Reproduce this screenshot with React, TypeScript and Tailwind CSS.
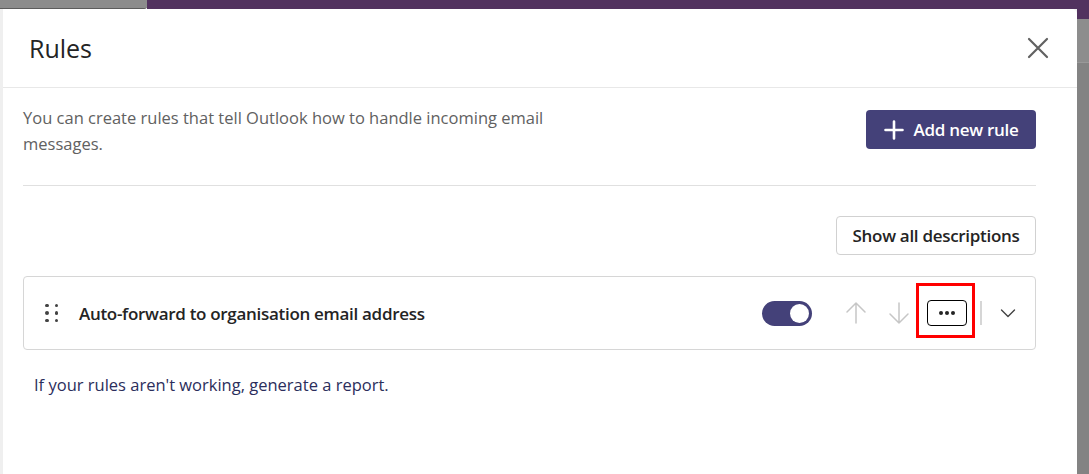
import React from "react";

const font = { fontFamily: '"Open Sans", "Noto Sans", sans-serif' };

function Plus() {
  return (
    <svg width="20" height="20" viewBox="0 0 20 20" className="shrink-0">
      <path d="M10 1.5v17M1.5 10h17" stroke="white" strokeWidth="2.6" strokeLinecap="round" />
    </svg>
  );
}

function Close() {
  return (
    <svg width="22" height="22" viewBox="0 0 22 22">
      <path d="M2 2l18 18M20 2L2 20" stroke="#616161" strokeWidth="2.2" strokeLinecap="round" />
    </svg>
  );
}

function Arrow({ down }: { down?: boolean }) {
  return (
    <svg width="22" height="24" viewBox="0 0 22 24" style={{ transform: down ? "rotate(180deg)" : undefined }}>
      <path d="M11 22V2M2 11l9-9 9 9" stroke="#c6c6c6" strokeWidth="1.5" fill="none" strokeLinecap="round" strokeLinejoin="round" />
    </svg>
  );
}

export default function App() {
  return (
    <div className="w-[1089px] h-[474px] overflow-hidden bg-[#f1f1f1] flex flex-col" style={font}>
      <div className="flex h-[9px] shrink-0">
        <div className="w-[147px] bg-[#8c8c8c] border-b border-[#5c5c5c] rounded-br-[3px]" />
        <div className="flex-1 bg-[#52325f]" />
      </div>
      <div className="flex flex-1 min-h-0">
        <div className="w-[3px] bg-[#efefef]" />
        <div className="flex-1 bg-white rounded-tr-[5px] flex flex-col">
          <div className="h-[79px] border-b border-[#e8e8e8] flex items-center justify-between pl-[26px] pr-[28px] shrink-0">
            <div className="text-[25px] font-medium text-[#242424] pt-[2px]">Rules</div>
            <Close />
          </div>
          <div className="pl-[20px] pr-[41px] flex flex-col">
            <div className="flex justify-between items-start pt-[17px] pb-[28px] border-b border-[#e0e0e0]">
              <p className="text-[16.5px] leading-[26px] text-[#616161] w-[560px]">
                You can create rules that tell Outlook how to handle incoming email messages.
              </p>
              <button className="mt-[5px] h-[39px] w-[170px] rounded-[4px] bg-[#444179] text-white flex items-center justify-center gap-[10px] text-[17px] font-semibold">
                <Plus />
                <span className="tracking-[-0.3px]">Add new rule</span>
              </button>
            </div>
            <div className="flex justify-end pt-[30px]">
              <button className="h-[39px] w-[200px] rounded-[4px] border border-[#d1d1d1] text-[17px] font-semibold text-[#242424] tracking-[-0.3px]">
                Show all descriptions
              </button>
            </div>
            <div className="mt-[21px] h-[74px] border border-[#d6d6d6] rounded-[4px] flex items-center pl-[21px] pr-[19px]">
              <div className="grid grid-cols-2 gap-x-[6px] gap-y-[4px] w-[13px]">
                {Array.from({ length: 6 }).map((_, i) => (
                  <div key={i} className="w-[3.5px] h-[3.5px] rounded-full bg-[#424242]" />
                ))}
              </div>
              <div className="ml-[21px] mt-[2px] text-[17px] font-semibold text-[#242424] tracking-[-0.3px]">
                Auto-forward to organisation email address
              </div>
              <div className="flex-1" />
              <div className="w-[50px] h-[25px] rounded-full bg-[#444179] flex items-center justify-end pr-[3px]">
                <div className="w-[19px] h-[19px] rounded-full bg-white" />
              </div>
              <div className="ml-[33px]"><Arrow /></div>
              <div className="ml-[21px]"><Arrow down /></div>
              <div className="relative ml-[17px]">
                <button className="w-[40px] h-[26px] rounded-[4px] border-[1.5px] border-black flex items-center justify-center gap-[2px]">
                  <span className="w-[4px] h-[4px] rounded-full bg-[#242424]" />
                  <span className="w-[4px] h-[4px] rounded-full bg-[#242424]" />
                  <span className="w-[4px] h-[4px] rounded-full bg-[#242424]" />
                </button>
                <div className="absolute left-[-11px] top-[-17px] w-[59px] h-[55px] border-[3px] border-[#ff0000]" />
              </div>
              <div className="ml-[13px] w-[2px] h-[24px] bg-[#d6d6d6]" />
              <svg width="16" height="10" viewBox="0 0 16 10" className="ml-[18px]">
                <path d="M1.5 2l6.5 6.5L14.5 2" stroke="#424242" strokeWidth="1.4" fill="none" strokeLinecap="round" strokeLinejoin="round" />
              </svg>
            </div>
            <p className="mt-[23px] ml-[11px] text-[16.5px] text-[#2b2e5c]">
              If your rules aren't working, generate a report.
            </p>
          </div>
        </div>
        <div className="w-[12px] flex flex-col">
          <div className="h-[10px] bg-[#52325f]" />
          <div className="h-[44px] bg-[#8d8d8d] border-b border-[#999]" />
          <div className="flex-1 bg-[#838383]" />
        </div>
      </div>
    </div>
  );
}
